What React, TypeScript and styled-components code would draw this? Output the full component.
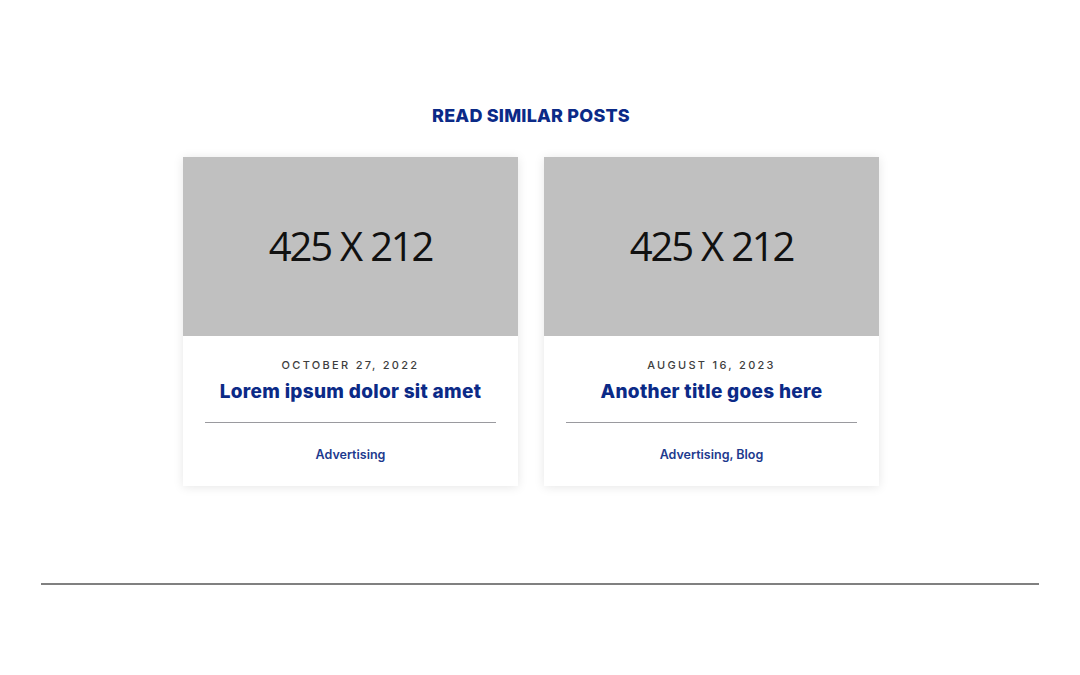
import styled, { createGlobalStyle } from 'styled-components';

type Post = {
  date : string,
  title : string,
  tags : string,
}

const posts : Post[] = [
  { date : 'October 27, 2022', title : 'Lorem ipsum dolor sit amet', tags : 'Advertising' },
  { date : 'August 16, 2023', title : 'Another title goes here', tags : 'Advertising, Blog' },
]

const GlobalStyle = createGlobalStyle`
  body {
    margin:0;
    background:#fff;
    font-family: Inter, "Noto Sans", sans-serif;
  }
`

const Page = styled.main`
  display:flex;
  flex-direction:column;
  padding-top:105px;
`

const Related = styled.section`
  display:flex;
  flex-direction:column;
  align-items:center;
  padding-right:18px;
`

const Heading = styled.h2`
  margin:0 0 30px;
  font-size:18px;
  line-height:22px;
  font-weight:800;
  color:#0b2a87;
  text-transform:uppercase;
  letter-spacing:0.2px;
`

const CardRow = styled.div`
  display:grid;
  grid-template-columns:repeat(2, 335px);
  gap:26px;
`

const Card = styled.article`
  display:flex;
  flex-direction:column;
  background:#fff;
  box-shadow:0 1px 10px rgba(0,0,0,0.1);
`

const Thumb = styled.div`
  display:flex;
  align-items:center;
  justify-content:center;
  height:179px;
  background:#c0c0c0;
  color:#111;
  font-family:"Open Sans", sans-serif;
  font-size:40px;
  letter-spacing:-2.2px;
  word-spacing:1px;
  padding-bottom:2px;
  box-sizing:border-box;
`

const CardBody = styled.div`
  display:flex;
  flex-direction:column;
  align-items:center;
  padding:21px 22px 22px;
`

const PostDate = styled.div`
  font-size:11px;
  line-height:16px;
  font-weight:500;
  letter-spacing:2.3px;
  text-transform:uppercase;
  color:#3e3e3e;
`

const PostTitle = styled.h3`
  margin:6px 0 0;
  font-size:19px;
  line-height:26px;
  font-weight:800;
  color:#0b2a87;
  letter-spacing:0.3px;
`

const Divider = styled.hr`
  align-self:stretch;
  margin:17px 0 0;
  border:none;
  border-top:1px solid #9a9a9f;
`

const Tags = styled.div`
  margin-top:23px;
  font-size:12.5px;
  line-height:18px;
  font-weight:600;
  color:#1d3a8e;
`

const FooterRule = styled.hr`
  margin:97px 41px 0;
  border:none;
  border-top:2px solid #808080;
`

export default function App() {
  return (
    <>
      <GlobalStyle />
      <Page>
        <Related>
          <Heading>Read similar posts</Heading>
          <CardRow>
            {posts.map((p) => (
              <Card key={p.title}>
                <Thumb>425 X 212</Thumb>
                <CardBody>
                  <PostDate>{p.date}</PostDate>
                  <PostTitle>{p.title}</PostTitle>
                  <Divider />
                  <Tags>{p.tags}</Tags>
                </CardBody>
              </Card>
            ))}
          </CardRow>
        </Related>
        <FooterRule />
      </Page>
    </>
  )
}
